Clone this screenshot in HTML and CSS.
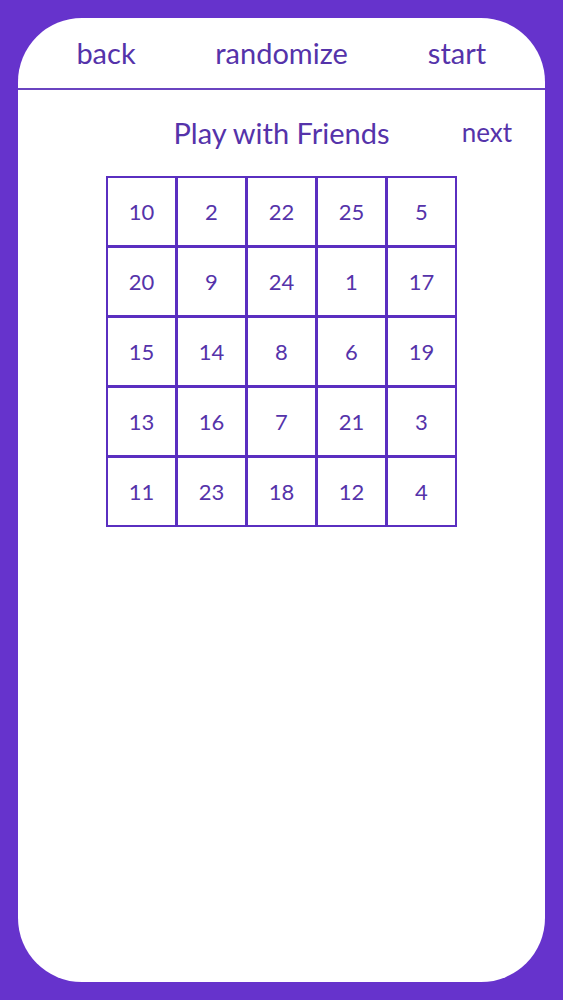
FILE: index.html
```html
<!DOCTYPE html>
<html>
<head>
<meta charset="utf-8">
<link rel="stylesheet" href="styles.css">
</head>
<body>
<div class="card">
  <header class="topbar">
    <span class="nav">back</span>
    <span class="nav">randomize</span>
    <span class="nav">start</span>
  </header>
  <div class="titlerow">
    <span class="title">Play with Friends</span>
    <span class="next">next</span>
  </div>
  <div class="board">
    <div class="cell">10</div><div class="cell">2</div><div class="cell">22</div><div class="cell">25</div><div class="cell">5</div>
    <div class="cell">20</div><div class="cell">9</div><div class="cell">24</div><div class="cell">1</div><div class="cell">17</div>
    <div class="cell">15</div><div class="cell">14</div><div class="cell">8</div><div class="cell">6</div><div class="cell">19</div>
    <div class="cell">13</div><div class="cell">16</div><div class="cell">7</div><div class="cell">21</div><div class="cell">3</div>
    <div class="cell">11</div><div class="cell">23</div><div class="cell">18</div><div class="cell">12</div><div class="cell">4</div>
  </div>
</div>
</body>
</html>
```

FILE: styles.css
```css
html, body {
  margin: 0;
  padding: 0;
}
body {
  background: #6633cc;
  width: 563px;
  height: 1000px;
  padding: 18px;
  box-sizing: border-box;
  font-family: "Lato", "Open Sans", sans-serif;
  color: #5533aa;
}
.card {
  background: #ffffff;
  width: 527px;
  height: 964px;
  border-radius: 64px;
  overflow: hidden;
}
.topbar {
  height: 72px;
  display: grid;
  grid-template-columns: 176px 175px 176px;
  align-items: center;
  border-bottom: 2px solid #6a44c0;
  box-sizing: border-box;
}
.nav {
  text-align: center;
  font-size: 29px;
  line-height: 1;
  padding-bottom: 2px;
}
.titlerow {
  position: relative;
  height: 86px;
  display: flex;
  align-items: center;
  justify-content: center;
}
.title {
  font-size: 29px;
  line-height: 1;
  padding-bottom: 2px;
}
.next {
  position: absolute;
  right: 33px;
  top: 29px;
  font-size: 26px;
  line-height: 1;
}
.board {
  margin-left: 88px;
  width: 351px;
  box-sizing: border-box;
  border: 2px solid #5a2fc0;
  background: #5a2fc0;
  display: grid;
  grid-template-columns: repeat(5, 67px);
  grid-auto-rows: 67px;
  gap: 3px;
}
.cell {
  background: #ffffff;
  display: flex;
  align-items: center;
  justify-content: center;
  font-size: 22px;
}
```
